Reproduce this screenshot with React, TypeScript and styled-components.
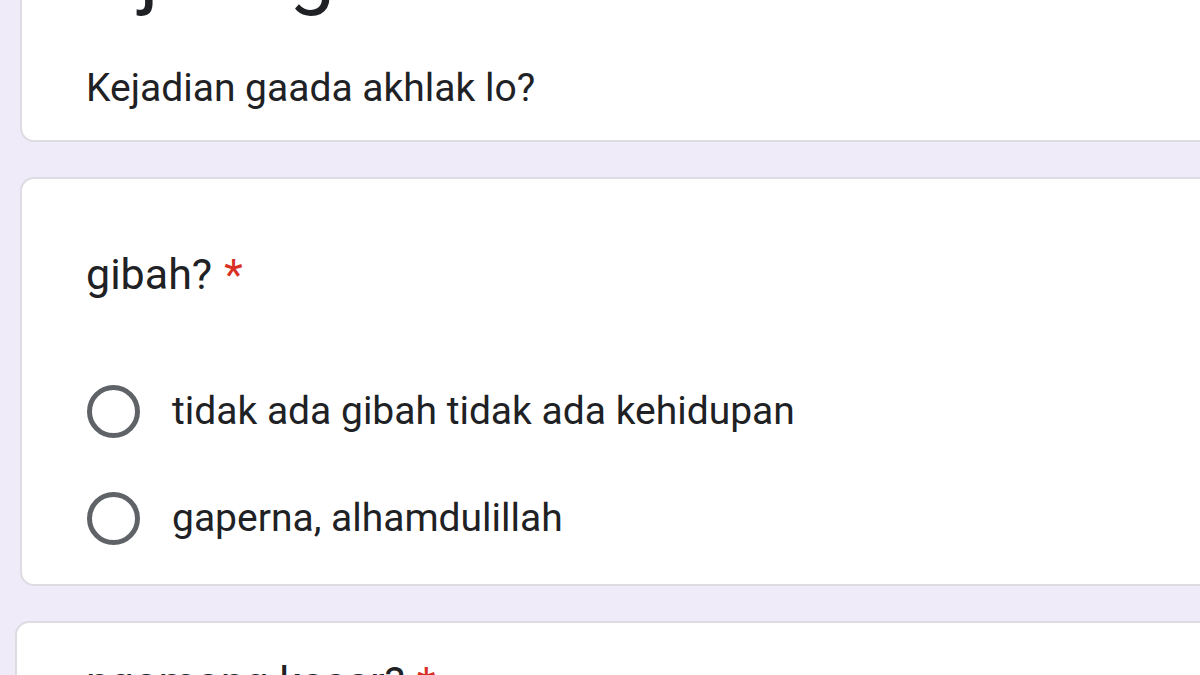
import React from "react";
import styled, { createGlobalStyle } from "styled-components";

const GlobalStyle = createGlobalStyle`
  html, body {
    margin: 0;
    padding: 0;
    background: #f0ebf8;
    overflow: hidden;
    width: 1200px;
    height: 675px;
  }
  * { box-sizing: border-box; }
`;

const Page = styled.main`
  display: flex;
  flex-direction: column;
  gap: 35px;
  margin-top: -112px;
  padding-left: 20px;
  font-family: Roboto, "Liberation Sans", Arial, sans-serif;
  color: #202124;
`;

const Card = styled.section<{ $top: number; $bottom: number; $shift?: number }>`
  width: 1300px;
  margin-left: ${(p) => -(p.$shift ?? 0)}px;
  background: #ffffff;
  border: 2px solid #dddce3;
  border-radius: 14px;
  padding: ${(p) => p.$top}px 0 ${(p) => p.$bottom}px ${(p) => 64 + (p.$shift ?? 0)}px;
  display: flex;
  flex-direction: column;
`;

const FormTitle = styled.h1`
  margin: 0 0 52px;
  font-size: 82px;
  font-weight: 400;
  line-height: 82px;
  white-space: nowrap;
`;

const Description = styled.p`
  margin: 0;
  font-size: 39px;
  line-height: 48px;
`;

const Question = styled.h2`
  margin: 0;
  font-size: 43px;
  font-weight: 400;
  line-height: 52px;
  white-space: nowrap;
`;

const Required = styled.span`
  color: #d93025;
  margin-left: 12px;
`;

const Options = styled.div`
  display: flex;
  flex-direction: column;
  gap: 55px;
  margin-top: 85px;
`;

const Option = styled.label`
  display: flex;
  align-items: center;
  gap: 32px;
  height: 52px;
  font-size: 39px;
  line-height: 52px;
  white-space: nowrap;
`;

const Radio = styled.span`
  flex: none;
  width: 53px;
  height: 53px;
  border-radius: 50%;
  border: 5px solid #5f6368;
  margin-left: 1px;
`;

export default function App() {
  return (
    <>
      <GlobalStyle />
      <Page>
        <Card $top={40} $bottom={28}>
          <FormTitle>Ujian gibah</FormTitle>
          <Description>Kejadian gaada akhlak lo?</Description>
        </Card>
        <Card $top={69} $bottom={40}>
          <Question>
            gibah?<Required>*</Required>
          </Question>
          <Options>
            <Option>
              <Radio />
              tidak ada gibah tidak ada kehidupan
            </Option>
            <Option>
              <Radio />
              gaperna, alhamdulillah
            </Option>
          </Options>
        </Card>
        <Card $top={33} $bottom={40} $shift={5}>
          <Question>
            ngomong kasar?<Required>*</Required>
          </Question>
        </Card>
      </Page>
    </>
  );
}
